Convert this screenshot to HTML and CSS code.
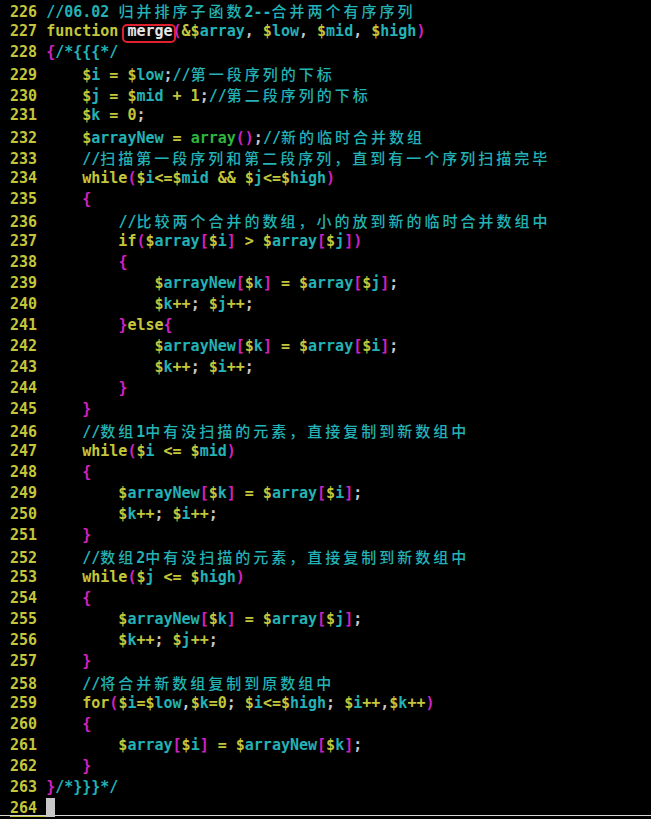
FILE: index.html
```html
<!DOCTYPE html>
<html lang="zh">
<head>
  <meta charset="UTF-8" />
  <title>merge.php - vim</title>
  <link rel="stylesheet" href="styles.css">
</head>
<body>
  <main class="editor">
    <div class="line"><span class="ln">226 </span><span class="c">//06.02 <span class="zh">归并排序子函数</span>2--<span class="zh">合并两个有序序列</span></span></div>
    <div class="line"><span class="ln">227 </span>function <span class="mark">merge</span><span class="p">(</span>&amp;$<span class="v">array</span><span class="s">,</span> $<span class="v">low</span><span class="s">,</span> $<span class="v">mid</span><span class="s">,</span> $<span class="v">high</span><span class="p">)</span></div>
    <div class="line"><span class="ln">228 </span><span class="p">{</span><span class="c">/*{{{*/</span></div>
    <div class="line"><span class="ln">229 </span>    $<span class="v">i</span> = $<span class="v">low</span><span class="s">;</span><span class="c">//<span class="zh">第一段序列的下标</span></span></div>
    <div class="line"><span class="ln">230 </span>    $<span class="v">j</span> = $<span class="v">mid</span> + 1<span class="s">;</span><span class="c">//<span class="zh">第二段序列的下标</span></span></div>
    <div class="line"><span class="ln">231 </span>    $<span class="v">k</span> = 0<span class="s">;</span></div>
    <div class="line"><span class="ln">232 </span>    $<span class="v">arrayNew</span> = <span class="fn">array</span><span class="p">()</span><span class="s">;</span><span class="c">//<span class="zh">新的临时合并数组</span></span></div>
    <div class="line"><span class="ln">233 </span>    <span class="c">//<span class="zh">扫描第一段序列和第二段序列，直到有一个序列扫描完毕</span></span></div>
    <div class="line"><span class="ln">234 </span>    while<span class="p">(</span>$<span class="v">i</span>&lt;=$<span class="v">mid</span> &amp;&amp; $<span class="v">j</span>&lt;=$<span class="v">high</span><span class="p">)</span></div>
    <div class="line"><span class="ln">235 </span>    <span class="p">{</span></div>
    <div class="line"><span class="ln">236 </span>        <span class="c">//<span class="zh">比较两个合并的数组，小的放到新的临时合并数组中</span></span></div>
    <div class="line"><span class="ln">237 </span>        if<span class="p">(</span>$<span class="v">array</span><span class="p">[</span>$<span class="v">i</span><span class="p">]</span> &gt; $<span class="v">array</span><span class="p">[</span>$<span class="v">j</span><span class="p">])</span></div>
    <div class="line"><span class="ln">238 </span>        <span class="p">{</span></div>
    <div class="line"><span class="ln">239 </span>            $<span class="v">arrayNew</span><span class="p">[</span>$<span class="v">k</span><span class="p">]</span> = $<span class="v">array</span><span class="p">[</span>$<span class="v">j</span><span class="p">]</span><span class="s">;</span></div>
    <div class="line"><span class="ln">240 </span>            $<span class="v">k</span>++<span class="s">;</span> $<span class="v">j</span>++<span class="s">;</span></div>
    <div class="line"><span class="ln">241 </span>        <span class="p">}</span>else<span class="p">{</span></div>
    <div class="line"><span class="ln">242 </span>            $<span class="v">arrayNew</span><span class="p">[</span>$<span class="v">k</span><span class="p">]</span> = $<span class="v">array</span><span class="p">[</span>$<span class="v">i</span><span class="p">]</span><span class="s">;</span></div>
    <div class="line"><span class="ln">243 </span>            $<span class="v">k</span>++<span class="s">;</span> $<span class="v">i</span>++<span class="s">;</span></div>
    <div class="line"><span class="ln">244 </span>        <span class="p">}</span></div>
    <div class="line"><span class="ln">245 </span>    <span class="p">}</span></div>
    <div class="line"><span class="ln">246 </span>    <span class="c">//<span class="zh">数组</span>1<span class="zh">中有没扫描的元素，直接复制到新数组中</span></span></div>
    <div class="line"><span class="ln">247 </span>    while<span class="p">(</span>$<span class="v">i</span> &lt;= $<span class="v">mid</span><span class="p">)</span></div>
    <div class="line"><span class="ln">248 </span>    <span class="p">{</span></div>
    <div class="line"><span class="ln">249 </span>        $<span class="v">arrayNew</span><span class="p">[</span>$<span class="v">k</span><span class="p">]</span> = $<span class="v">array</span><span class="p">[</span>$<span class="v">i</span><span class="p">]</span><span class="s">;</span></div>
    <div class="line"><span class="ln">250 </span>        $<span class="v">k</span>++<span class="s">;</span> $<span class="v">i</span>++<span class="s">;</span></div>
    <div class="line"><span class="ln">251 </span>    <span class="p">}</span></div>
    <div class="line"><span class="ln">252 </span>    <span class="c">//<span class="zh">数组</span>2<span class="zh">中有没扫描的元素，直接复制到新数组中</span></span></div>
    <div class="line"><span class="ln">253 </span>    while<span class="p">(</span>$<span class="v">j</span> &lt;= $<span class="v">high</span><span class="p">)</span></div>
    <div class="line"><span class="ln">254 </span>    <span class="p">{</span></div>
    <div class="line"><span class="ln">255 </span>        $<span class="v">arrayNew</span><span class="p">[</span>$<span class="v">k</span><span class="p">]</span> = $<span class="v">array</span><span class="p">[</span>$<span class="v">j</span><span class="p">]</span><span class="s">;</span></div>
    <div class="line"><span class="ln">256 </span>        $<span class="v">k</span>++<span class="s">;</span> $<span class="v">j</span>++<span class="s">;</span></div>
    <div class="line"><span class="ln">257 </span>    <span class="p">}</span></div>
    <div class="line"><span class="ln">258 </span>    <span class="c">//<span class="zh">将合并新数组复制到原数组中</span></span></div>
    <div class="line"><span class="ln">259 </span>    for<span class="p">(</span>$<span class="v">i</span>=$<span class="v">low</span><span class="s">,</span>$<span class="v">k</span>=0<span class="s">;</span> $<span class="v">i</span>&lt;=$<span class="v">high</span><span class="s">;</span> $<span class="v">i</span>++<span class="s">,</span>$<span class="v">k</span>++<span class="p">)</span></div>
    <div class="line"><span class="ln">260 </span>    <span class="p">{</span></div>
    <div class="line"><span class="ln">261 </span>        $<span class="v">array</span><span class="p">[</span>$<span class="v">i</span><span class="p">]</span> = $<span class="v">arrayNew</span><span class="p">[</span>$<span class="v">k</span><span class="p">]</span><span class="s">;</span></div>
    <div class="line"><span class="ln">262 </span>    <span class="p">}</span></div>
    <div class="line"><span class="ln">263 </span><span class="p">}</span><span class="c">/*}}}*/</span></div>
    <div class="line cursorline"><span class="ln">264 </span><span class="cursor"></span></div>
  </main>
</body>
</html>
```

FILE: styles.css
```css
html {
  background: #000;
}

body {
  margin: 0;
  background: #000;
  overflow: hidden;
}

.editor {
  font-family: "DejaVu Sans Mono", "Noto Sans CJK SC", monospace;
  font-size: 15px;
  font-weight: bold;
  line-height: 21px;
  color: #c4c63a; /* keywords, $, operators, numbers */
}

.line {
  height: 21px;
  padding-left: 10px;
  white-space: pre;
}

.ln {
  color: #c4c63a;
}

.v,
.c {
  color: #23b2b6;
}

.p {
  color: #cf22c4;
}

.s {
  color: #c8c8c8;
}

.fn {
  color: #2fb63c;
}

/* CJK glyphs take two terminal cells */
.zh {
  font-family: "Noto Sans CJK SC", sans-serif;
  font-weight: 500;
  letter-spacing: 3px;
}

/* red annotation box round the function name */
.mark {
  position: relative;
  color: #e6e6e6;
}

.mark::after {
  content: "";
  position: absolute;
  left: -5px;
  right: -3px;
  top: 2px;
  bottom: -3px;
  border: 2px solid #e0202c;
  border-radius: 5px;
}

/* cursor line: underlined, number in yellow */
.cursorline {
  background: linear-gradient(#d4d4d4, #d4d4d4) no-repeat 0 17px / 100% 1px;
}

.cursorline .ln {
  background: linear-gradient(#c4c63a, #c4c63a) no-repeat 0 17px / 100% 1px;
}

.cursor {
  display: inline-block;
  width: 9px;
  height: 19px;
  vertical-align: top;
  background: #c8c8c8;
}
```
